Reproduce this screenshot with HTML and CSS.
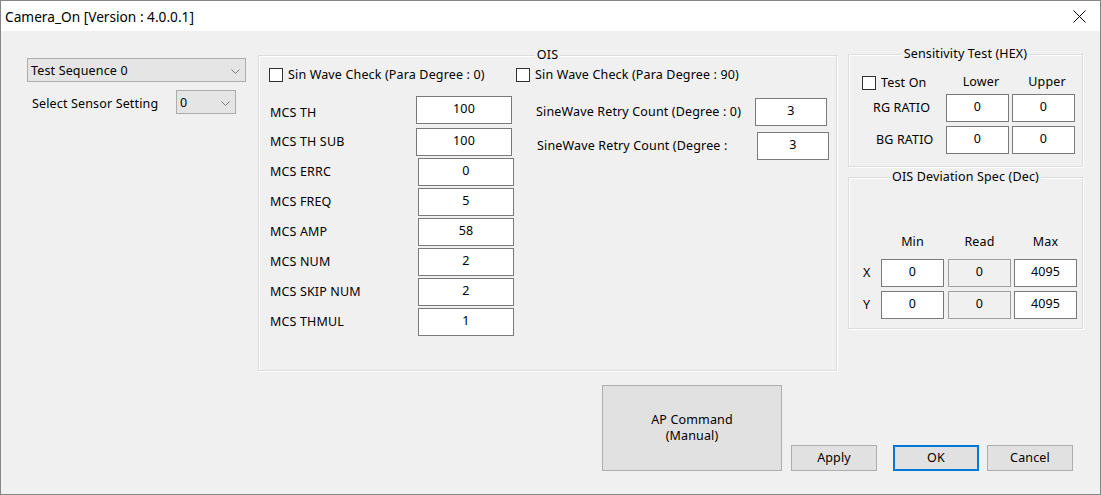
FILE: index.html
```html
<!DOCTYPE html>
<html>
<head>
<meta charset="utf-8">
<title>Camera_On</title>
<link rel="stylesheet" href="styles.css">
</head>
<body>
<div class="window">
  <div class="titlebar">
    <span class="title">Camera_On [Version : 4.0.0.1]</span>
    <svg class="close" width="13" height="13" viewBox="0 0 13 13"><path d="M0.5 0.5 L12.5 12.5 M12.5 0.5 L0.5 12.5" stroke="#000" stroke-width="1" fill="none"/></svg>
  </div>
  <div class="client">
    <div class="top">
      <div class="leftcol">
        <div class="combo">
          <span>Test Sequence 0</span>
          <svg class="chev" width="9" height="5" viewBox="0 0 9 5"><path d="M0.5 0.5 L4.5 4.5 L8.5 0.5" stroke="#7a7a7a" fill="none"/></svg>
        </div>
        <div class="sensor-row">
          <span class="sensor-label">Select Sensor Setting</span>
          <div class="combo combo-small">
            <span>0</span>
            <svg class="chev" width="9" height="5" viewBox="0 0 9 5"><path d="M0.5 0.5 L4.5 4.5 L8.5 0.5" stroke="#7a7a7a" fill="none"/></svg>
          </div>
        </div>
      </div>

      <div class="group group-ois">
        <div class="group-title">OIS</div>
        <div class="ois-body">
          <div class="ois-left">
            <div class="check"><span class="box"></span>Sin Wave Check (Para Degree : 0)</div>
            <div class="row row-first"><span class="lbl lbl-low">MCS TH</span><input class="field" type="text" value="100"></div>
            <div class="row row-second"><span class="lbl">MCS TH SUB</span><input class="field" type="text" value="100"></div>
            <div class="row"><span class="lbl lbl-w">MCS ERRC</span><input class="field" type="text" value="0"></div>
            <div class="row"><span class="lbl lbl-w">MCS FREQ</span><input class="field" type="text" value="5"></div>
            <div class="row"><span class="lbl lbl-w">MCS AMP</span><input class="field" type="text" value="58"></div>
            <div class="row"><span class="lbl lbl-w">MCS NUM</span><input class="field" type="text" value="2"></div>
            <div class="row"><span class="lbl lbl-w">MCS SKIP NUM</span><input class="field" type="text" value="2"></div>
            <div class="row"><span class="lbl lbl-w">MCS THMUL</span><input class="field" type="text" value="1"></div>
          </div>
          <div class="ois-right">
            <div class="check"><span class="box"></span>Sin Wave Check (Para Degree : 90)</div>
            <div class="rrow rrow-1"><span class="rlbl rlbl-1">SineWave Retry Count (Degree : 0)</span><input class="field field-retry" type="text" value="3"></div>
            <div class="rrow rrow-2"><span class="rlbl rlbl-2">SineWave Retry Count (Degree :</span><input class="field field-retry" type="text" value="3"></div>
          </div>
        </div>
      </div>

      <div class="rightcol">
        <div class="group group-sens">
          <div class="group-title">Sensitivity Test (HEX)</div>
          <div class="sens-grid">
            <div class="check check-sens"><span class="box"></span>Test On</div>
            <div class="hdr hdr-sens">Lower</div>
            <div class="hdr hdr-sens">Upper</div>
            <div class="slbl">RG RATIO</div>
            <input class="field field-grid" type="text" value="0">
            <input class="field field-grid" type="text" value="0">
            <div class="slbl slbl-b">BG RATIO</div>
            <input class="field field-grid" type="text" value="0">
            <input class="field field-grid" type="text" value="0">
          </div>
        </div>
        <div class="group group-dev">
          <div class="group-title">OIS Deviation Spec (Dec)</div>
          <div class="dev-grid">
            <div></div>
            <div class="hdr">Min</div>
            <div class="hdr">Read</div>
            <div class="hdr">Max</div>
            <div class="axis">X</div>
            <input class="field field-dev" type="text" value="0">
            <input class="field field-dev field-read" type="text" value="0" readonly>
            <input class="field field-dev" type="text" value="4095">
            <div class="axis">Y</div>
            <input class="field field-dev" type="text" value="0">
            <input class="field field-dev field-read" type="text" value="0" readonly>
            <input class="field field-dev" type="text" value="4095">
          </div>
        </div>
      </div>
    </div>

    <div class="bottom">
      <button class="btn btn-ap">AP Command<br>(Manual)</button>
      <button class="btn btn-sm btn-apply">Apply</button>
      <button class="btn btn-sm btn-ok">OK</button>
      <button class="btn btn-sm btn-cancel">Cancel</button>
    </div>
  </div>
</div>
</body>
</html>
```

FILE: styles.css
```css
* {
  box-sizing: border-box;
}

body {
  margin: 0;
  font-family: "Noto Sans", "Open Sans", sans-serif;
  font-size: 12.5px;
  letter-spacing: 0.15px;
  line-height: 16px;
  color: #000;
  background: #fff;
}

.window {
  width: 1101px;
  height: 495px;
  border: 1px solid #868686;
  display: flex;
  flex-direction: column;
  background: #f0f0f0;
}

.titlebar {
  height: 30px;
  flex: none;
  background: #fff;
  display: flex;
  align-items: center;
  justify-content: space-between;
  padding: 0 14px 0 4px;
}

.title {
  font-size: 13.7px;
  letter-spacing: 0;
  line-height: 30px;
  padding-top: 1px;
}

.close {
  display: block;
}

.client {
  flex: 1;
}

.top {
  display: flex;
  align-items: flex-start;
}

/* left column */
.leftcol {
  width: 219px;
  margin: 27px 0 0 26px;
}

.combo {
  display: flex;
  align-items: center;
  justify-content: space-between;
  height: 24px;
  background: #e5e5e5;
  border: 1px solid #acacac;
  padding: 1px 5px 0 3px;
}

.chev {
  display: block;
  margin-top: 1px;
}

.combo-small {
  width: 60px;
}

.sensor-row {
  display: flex;
  align-items: center;
  justify-content: space-between;
  margin-top: 8px;
  padding: 0 10px 0 5px;
}

.sensor-label {
  padding-top: 4px;
}

/* group boxes */
.group {
  border: 1px solid #dcdcdc;
  box-shadow: inset 1px 1px 0 #fff, 1px 1px 0 #fff;
}

.group-title {
  width: fit-content;
  margin: -9px auto 0;
  padding: 0 2px;
  background: #f0f0f0;
  line-height: 16px;
  white-space: nowrap;
}

.group-ois {
  width: 579px;
  height: 316px;
  margin: 24px 0 0 12px;
}

.ois-body {
  display: flex;
}

.ois-left {
  width: 257px;
  padding-left: 10px;
}

.ois-right {
  flex: 1;
}

.check {
  display: flex;
  align-items: center;
  height: 16px;
  margin-top: 4px;
  white-space: nowrap;
}

.box {
  width: 14px;
  height: 14px;
  flex: none;
  border: 1px solid #333;
  background: #fff;
  margin-right: 5px;
}

.row {
  display: flex;
  align-items: center;
  height: 28px;
  margin-top: 2px;
}

.row-first {
  margin-top: 13px;
}

.row-second {
  margin-top: 4px;
}

.lbl {
  width: 147px;
  flex: none;
  padding-left: 1px;
  white-space: nowrap;
}

.lbl-w {
  width: 149px;
}

.lbl-low {
  padding-top: 6px;
}

.field {
  display: block;
  width: 96px;
  height: 28px;
  margin: 0;
  border: 1px solid #7a7a7a;
  background: #fff;
  font: inherit;
  letter-spacing: inherit;
  line-height: 16px;
  color: #000;
  text-align: center;
  padding: 0 0 4px;
  outline: none;
}

.rrow {
  display: flex;
  align-items: center;
  height: 28px;
}

.rrow-1 {
  margin-top: 15px;
}

.rrow-2 {
  margin-top: 6px;
}

.rlbl {
  flex: none;
  white-space: nowrap;
}

.rlbl-1 {
  margin-left: 20px;
  width: 219px;
}

.rlbl-2 {
  margin-left: 21px;
  width: 220px;
}

.field-retry {
  width: 72px;
}

/* right column */
.rightcol {
  width: 235px;
  margin-left: 11px;
}

.group-sens {
  height: 113px;
  margin-top: 23px;
}

.sens-grid {
  display: grid;
  grid-template-columns: 94px 63px 63px;
  grid-template-rows: 16px 28px 28px;
  column-gap: 3px;
  row-gap: 4px;
  margin-top: 12px;
}

.check-sens {
  margin-top: 1px;
  padding-left: 13px;
}

.hdr {
  text-align: center;
}

.hdr-sens {
  padding-left: 7px;
}

.slbl {
  display: flex;
  align-items: center;
  padding-left: 24px;
  white-space: nowrap;
}

.slbl-b {
  padding-left: 27px;
}

.field-grid {
  width: 100%;
}

.group-dev {
  height: 152px;
  margin-top: 10px;
}

.dev-grid {
  display: grid;
  grid-template-columns: 32px 67px 66px 63px;
  grid-template-rows: 21px 28px 28px;
  row-gap: 4px;
  margin-top: 49px;
}

.dev-grid .hdr {
  width: 63px;
}

.axis {
  display: flex;
  align-items: center;
  padding-left: 14px;
}

.field-dev {
  width: 63px;
}

.field-read {
  background: #f0f0f0;
  border-color: #a0a0a0;
}

/* buttons */
.bottom {
  display: flex;
  align-items: flex-end;
  margin: 14px 0 0 601px;
}

.btn {
  margin: 0;
  padding: 0;
  background: #e1e1e1;
  border: 1px solid #adadad;
  font: inherit;
  letter-spacing: inherit;
  line-height: 16px;
  color: #000;
}

.btn-ap {
  width: 180px;
  height: 86px;
}

.btn-sm {
  width: 86px;
  height: 26px;
}

.btn-apply {
  margin-left: 9px;
}

.btn-ok {
  margin-left: 16px;
  border: 2px solid #0078d7;
}

.btn-cancel {
  margin-left: 8px;
}
```
